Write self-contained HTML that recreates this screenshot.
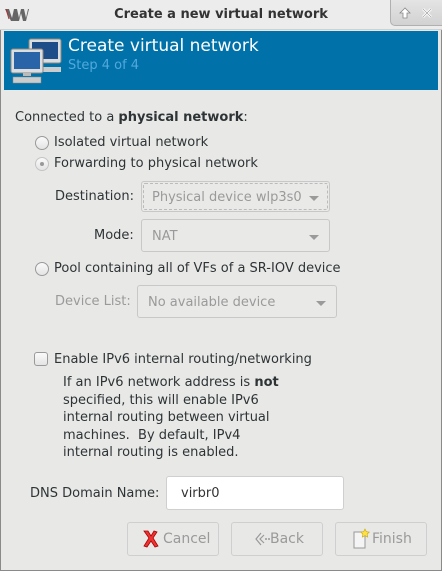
<!DOCTYPE html>
<html><head><meta charset="utf-8"><style>
*{margin:0;padding:0;box-sizing:border-box}
body{width:442px;height:571px;background:#e8e8e7;font-family:"DejaVu Sans","Liberation Sans",sans-serif;font-size:13px;color:#2e3436;position:relative;overflow:hidden}
.win{position:absolute;left:0;top:0;width:442px;height:571px;border:1px solid #8a8a8a;border-top:none}
.title{position:absolute;left:0;top:0;width:442px;height:30px;background:#ececec;border-bottom:1px solid #d0d0d0}
.title .t{position:absolute;left:0;width:442px;top:7px;text-align:center;font-weight:bold;font-size:13px;color:#333}
.btns{position:absolute;left:390px;top:0;width:52px;height:26px;background:linear-gradient(#e4e4e4,#d2d2d2);border-left:1px solid #b0b0b0;border-bottom:1px solid #b0b0b0;border-bottom-left-radius:5px}
.banner{position:absolute;left:4px;top:31px;width:434px;height:59px;background:#0072a9}
.abs{position:absolute;white-space:nowrap}
.radio{position:absolute;width:14px;height:14px;border:1px solid #9a9a9a;border-radius:50%;background:linear-gradient(#fafafa,#e4e4e4)}
.combo{position:absolute;border:1px solid #c8c8c8;border-radius:3px;background:#e9e9e8;color:#9a9a9a}
.arrow{position:absolute;width:0;height:0;border-left:5px solid transparent;border-right:5px solid transparent;border-top:5px solid #9a9a9a}
.btn{position:absolute;top:522px;height:34px;border:1px solid #cfcfcf;border-radius:3px;background:#e8e8e7;color:#9a9a9a;font-size:14px}
.gray{color:#9a9a9a}
</style></head><body>
<div class="win"></div>
<div class="title">
 <svg class="abs" style="left:5px;top:9px" width="24" height="12" viewBox="0 0 24 12"><path d="M0 0h4l3 9 2-9h3l2 9 2-9h3l2 9 2-9h1l-3 12h-3l-2-8-2 8H6z" fill="#666"/><path d="M1 0l3 10" stroke="#a33" stroke-width="1"/></svg>
 <div class="t">Create a new virtual network</div>
 <div class="btns">
  <svg class="abs" style="left:8px;top:7px" width="12" height="12" viewBox="0 0 12 12"><path d="M6 1L1 6h3v5h4V6h3z" fill="#fff" stroke="#888" stroke-width="0.8"/></svg>
  <svg class="abs" style="left:30px;top:7px" width="12" height="12" viewBox="0 0 12 12"><path d="M2 2l8 8M10 2l-8 8" stroke="#fff" stroke-width="2.6"/><path d="M2 2l8 8M10 2l-8 8" stroke="#999" stroke-width="0.6"/></svg>
 </div>
</div>
<div class="banner">
 <svg class="abs" style="left:5px;top:6px" width="54" height="48" viewBox="0 0 54 48">
  <rect x="20" y="2" width="32" height="24" rx="2" fill="#ddd" stroke="#888"/><rect x="23" y="5" width="26" height="17" fill="#1d4e8a"/>
  <rect x="26" y="30" width="26" height="5" fill="#ccc"/>
  <rect x="2" y="12" width="32" height="24" rx="2" fill="#ddd" stroke="#888"/><rect x="5" y="15" width="26" height="17" fill="#2a64a8"/>
  <rect x="14" y="36" width="8" height="3" fill="#bbb"/><rect x="4" y="40" width="28" height="6" fill="#ccc" stroke="#888" stroke-width="0.5"/>
 </svg>
 <div class="abs" style="left:64px;top:5px;font-size:17px;color:#fff">Create virtual network</div>
 <div class="abs" style="left:64px;top:27px;font-size:13px;color:#52a8dc">Step 4 of 4</div>
</div>

<div class="abs" style="left:15px;top:110px">Connected to a <b>physical network</b>:</div>
<div class="radio" style="left:35px;top:136px"></div>
<div class="abs" style="left:54px;top:135px">Isolated virtual network</div>
<div class="radio" style="left:35px;top:157px;border-color:#c4c4c4"><div style="position:absolute;left:4px;top:4px;width:4px;height:4px;border-radius:50%;background:#999"></div></div>
<div class="abs" style="left:54px;top:156px">Forwarding to physical network</div>

<div class="abs" style="left:55px;top:189px">Destination:</div>
<div class="combo" style="left:141px;top:181px;width:189px;height:31px"><div style="position:absolute;inset:1px;border:1px dashed #bbb;border-radius:2px"></div><div class="abs" style="left:10px;top:8px">Physical device wlp3s0</div><div class="arrow" style="left:167px;top:14px"></div></div>
<div class="abs" style="left:94px;top:228px">Mode:</div>
<div class="combo" style="left:141px;top:219px;width:189px;height:33px"><div class="abs" style="left:10px;top:9px">NAT</div><div class="arrow" style="left:167px;top:15px"></div></div>

<div class="radio" style="left:35px;top:262px"></div>
<div class="abs" style="left:54px;top:261px">Pool containing all of VFs of a SR-IOV device</div>
<div class="abs gray" style="left:55px;top:294px">Device List:</div>
<div class="combo" style="left:137px;top:285px;width:200px;height:33px"><div class="abs" style="left:10px;top:9px">No available device</div><div class="arrow" style="left:178px;top:15px"></div></div>

<div class="abs" style="left:34px;top:352px;width:14px;height:14px;border:1px solid #9a9a9a;border-radius:3px;background:linear-gradient(#fafafa,#e4e4e4)"></div>
<div class="abs" style="left:54px;top:352px">Enable IPv6 internal routing/networking</div>
<div class="abs" style="left:63px;top:374px;line-height:17.5px">If an IPv6 network address is <b>not</b><br>specified, this will enable IPv6<br>internal routing between virtual<br>machines.&nbsp; By default, IPv4<br>internal routing is enabled.</div>

<div class="abs" style="left:30px;top:486px">DNS Domain Name:</div>
<div class="abs" style="left:166px;top:476px;width:178px;height:34px;background:#fff;border:1px solid #cfcfcf;border-radius:3px"><div class="abs" style="left:14px;top:9px;color:#333">virbr0</div></div>

<div class="btn" style="left:127px;width:92px">
 <svg class="abs" style="left:14px;top:6px" width="18" height="20" viewBox="0 0 18 20"><path d="M2 2l5 7-5 8 3 1 4-6 4 6 3-1-5-8 4-6-3-1-3 5-3-5z" fill="#e33" stroke="#a00" stroke-width="0.8"/></svg>
 <div class="abs" style="left:35px;top:8px">Cancel</div></div>
<div class="btn" style="left:231px;width:92px">
 <svg class="abs" style="left:22px;top:8px" width="16" height="16" viewBox="0 0 16 16"><path d="M7 2L2 8l5 6M10 4L6 8l4 4" stroke="#999" stroke-width="1.2" fill="none"/><circle cx="12" cy="8" r="1" fill="#999"/><circle cx="15" cy="8" r="1" fill="#999"/></svg>
 <div class="abs" style="left:38px;top:8px">Back</div></div>
<div class="btn" style="left:335px;width:92px">
 <svg class="abs" style="left:16px;top:5px" width="18" height="22" viewBox="0 0 18 22"><path d="M2 4h11v16H2z" fill="#f4f4f4" stroke="#999"/><path d="M13 1l1.3 2.7 3 .4-2.2 2 .6 3-2.7-1.5-2.7 1.5.6-3-2.2-2 3-.4z" fill="#fde14a" stroke="#c9a800" stroke-width="0.6"/></svg>
 <div class="abs" style="left:36px;top:8px">Finish</div></div>
</body></html>
